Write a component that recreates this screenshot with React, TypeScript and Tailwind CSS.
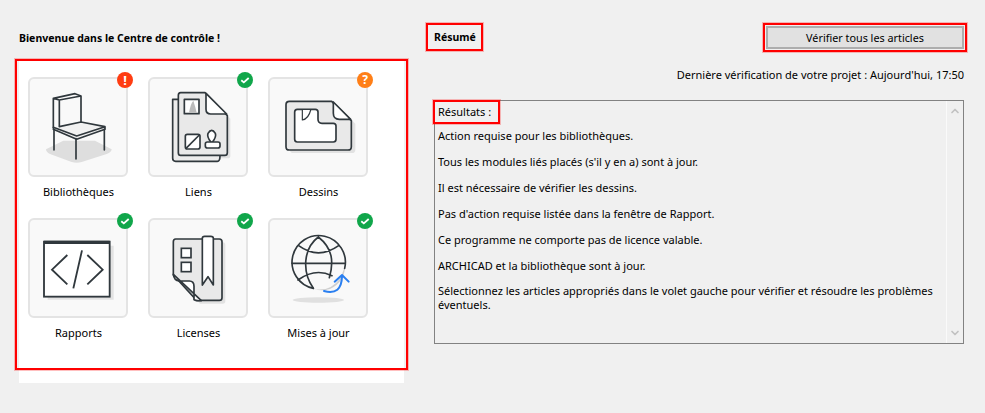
import { ChevronDown, ChevronUp } from "lucide-react";
import type { ReactNode } from "react";

const ink = "#30383d";

function Badge({ kind }: { kind: "error" | "ok" | "question" }) {
  const bg = kind === "error" ? "bg-[#ff3d12]" : kind === "question" ? "bg-[#ff7f17]" : "bg-[#10a64a]";
  return (
    <span className={`absolute -right-[7px] -top-[7px] flex h-4 w-4 items-center justify-center rounded-full ${bg}`}>
      {kind === "ok" && (
        <svg width="10" height="10" viewBox="0 0 10 10" fill="none" stroke="#fff" strokeWidth="1.8">
          <path d="M1.3 5.3 L3.8 7.4 L8.7 3" />
        </svg>
      )}
      {kind === "error" && <span className="text-[13px] font-bold leading-none text-white">!</span>}
      {kind === "question" && <span className="text-[12px] font-bold leading-none text-white">?</span>}
    </span>
  );
}

function Tile({ label, kind, box, children }: { label: string; kind: "error" | "ok" | "question"; box: string; children: ReactNode }) {
  return (
    <div className="flex h-[141px] w-[100px] flex-col items-center">
      <div className="relative h-[100px] w-[100px] rounded-[6px] border-2 border-[#e4e4e4] bg-[#f9f9f9]">
        <svg className="absolute -left-[2px] -top-[2px]" width="100" height="100" viewBox={box} fill="none" stroke={ink} strokeWidth="5" strokeLinejoin="round" strokeLinecap="round">
          {children}
        </svg>
        <Badge kind={kind} />
      </div>
      <span className="mt-[7px] whitespace-nowrap pl-px text-center leading-[16px]">{label}</span>
    </div>
  );
}

const liensDoc = "M512 128 H585 L652 197 V308 Q652 316 644 316 H512 Q505 316 505 308 V136 Q505 128 512 128Z";
const dessinsDoc = "M118 154 H245 L304 212 V290 Q304 300 294 300 H118 Q108 300 108 290 V164 Q108 154 118 154Z";
const licensesDoc = "M497 102 H628 Q636 102 636 110 V278 Q636 286 628 286 H560 L490 210 V110 Q490 102 497 102Z";

export default function App() {
  return (
    <div className="flex h-[413px] w-[985px] overflow-hidden bg-[#f0f0f0] text-[11px] text-black" style={{ fontFamily: '"Noto Sans", sans-serif' }}>
      <div className="ml-[19px] flex w-[385px] flex-col">
        <h1 className="mt-[30px] h-[29px] text-[10.5px] font-bold leading-[16px]">Bienvenue dans le Centre de contrôle !</h1>
        <div className="relative h-[324px] bg-white pl-[9px] pt-[18px]">
          <div className="absolute -left-[4px] top-0 h-[311px] w-[393px] border-2 border-[#ff0000] ring-1 ring-[#ff0000]/25" />
          <div className="grid w-[340px] grid-cols-3 gap-x-[20px]">
            <Tile label="Bibliothèques" kind="error" box="54 81 300 300">
              <path d="M108 298 L160 272 H255 L305 298 Q305 306 290 312 L215 336 Q200 340 185 336 L120 312 Q108 306 108 298Z" fill="#dedede" stroke="none" />
              <path d="M130 235 V145 L195 131 L213 138 V218 M130 145 L148 150 L213 138 M148 150 V228" />
              <path d="M130 232 L200 258 L285 230 L213 216 L148 230 M130 238 L200 268 L285 238 V230" fill="#f1f1f1" />
              <path d="M132 238 V300 M198 266 V327 M283 238 V300" />
            </Tile>
            <Tile label="Liens" kind="ok" box="414 81 300 300">
              <path d={liensDoc} fill="#e2e2e2" stroke="none" transform="translate(9 9)" />
              <path d="M505 148 H488 V325 Q488 334 497 334 H622 Q630 334 630 318" fill="#ececec" />
              <path d={liensDoc} fill="#e9e9e9" />
              <path d="M588 130 V178 Q588 192 602 192 H650 Z" fill="#fff" />
              <rect x="523" y="148" width="44" height="43" fill="#fff" />
              <path d="M537 188 Q542 160 550 152 Q556 170 560 188Z" fill="#bbb" stroke="none" />
              <rect x="526" y="253" width="44" height="44" rx="6" fill="#fff" />
              <path d="M528 295 L568 255" />
              <path d="M603 277 Q590 260 594 250 Q605 232 616 250 Q620 260 607 277" fill="#fff" />
              <rect x="586" y="276" width="44" height="18" rx="6" fill="#fff" />
            </Tile>
            <Tile label="Dessins" kind="question" box="54 81 300 300">
              <path d={dessinsDoc} fill="#e2e2e2" stroke="none" transform="translate(12 9)" />
              <path d={dessinsDoc} fill="#e9e9e9" />
              <path d="M250 156 V190 Q250 208 268 208 H302 Z" fill="#fff" />
              <path d="M142 178 H196 Q204 178 204 186 V208 Q204 220 216 220 H250 Q258 220 258 228 V268 Q258 276 250 276 H142 Q134 276 134 268 V186 Q134 178 142 178Z" fill="#fff" />
              <path d="M157 180 V210 Q176 206 182 180" fill="#fff" strokeWidth="3.5" />
            </Tile>
            <Tile label="Rapports" kind="ok" box="54 39 300 300">
              <path d="M113 122 H311 V284 H113Z" fill="#e2e2e2" stroke="none" />
              <rect x="102" y="110" width="197" height="165" fill="#fff" strokeLinejoin="miter" strokeWidth="5.5" />
              <path d="M102 112 H299" strokeWidth="10" strokeLinecap="butt" />
              <path d="M172 150 L126 194 L172 238 M232 150 L278 194 L232 238 M216 136 L190 250" strokeWidth="5.5" strokeLinecap="butt" strokeLinejoin="miter" />
            </Tile>
            <Tile label="Licenses" kind="ok" box="414 39 300 300">
              <path d={licensesDoc} fill="#e2e2e2" stroke="none" transform="translate(10 10)" />
              <path d={licensesDoc} fill="#e9e9e9" />
              <path d="M490 208 Q492 226 508 228 H538 Q552 228 552 244 V284 Q556 288 574 287 Z" fill="#fff" />
              <rect x="514" y="130" width="29" height="28" fill="#fff" strokeLinejoin="miter" />
              <rect x="514" y="172" width="29" height="28" fill="#fff" strokeLinejoin="miter" />
              <path d="M577 240 V100 Q577 94 584 94 H602 Q610 94 610 100 V240 L594 215 Z" fill="#fff" />
            </Tile>
            <Tile label="Mises à jour" kind="ok" box="54 39 300 300">
              <ellipse cx="205" cy="285" rx="77" ry="8" fill="#e0e0e0" stroke="none" />
              <path d="M192 252 Q240 262 272 218 L286 180 Q284 232 240 252 Q215 260 192 252Z" fill="#cfcfcf" stroke="none" />
              <path d="M190 250 A80 80 0 1 1 284 190" />
              <path d="M205 96 C160 130 155 200 190 250 M205 96 C248 130 252 170 238 218 M126 175 H284 M146 122 Q205 165 266 122 M144 225 Q195 188 246 212" />
              <path d="M222 258 Q275 272 276 214 M254 230 L276 210 L296 230" stroke="#2a7ff0" strokeWidth="6" />
            </Tile>
          </div>
        </div>
      </div>

      <div className="ml-[30px] flex w-[530px] flex-col">
        <div className="mt-[23px] flex h-[29px] items-start justify-between">
          <h2 className="-ml-[8px] flex h-[28px] w-[57px] items-center border-2 border-[#ff0000] pl-[6px] pt-[2px] text-[10.5px] font-bold ring-1 ring-[#ff0000]/25">Résumé</h2>
          <div className="-mr-[3px] border-2 border-[#ff0000] p-px ring-1 ring-[#ff0000]/25">
            <button type="button" className="flex h-[23px] w-[198px] items-center justify-center border-2 border-[#adadad] bg-[#e1e1e1] pt-px text-[10.8px]">
              Vérifier tous les articles
            </button>
          </div>
        </div>
        <p className="mt-[15px] h-[33px] text-right leading-[16px]">Dernière vérification de votre projet : Aujourd'hui, 17:50</p>
        <div className="flex h-[244px] border border-[#828282]">
          <div className="flex-1 pl-[3px]">
            <p className="-mb-[1px] -ml-[5px] -mt-[1px] flex h-[24px] w-[67px] items-center border-2 border-[#ff0000] pl-[3px] ring-1 ring-[#ff0000]/25">Résultats :</p>
            <div className="flex flex-col gap-[10px] pt-[5px] leading-[16px]">
              <p>Action requise pour les bibliothèques.</p>
              <p>Tous les modules liés placés (s'il y en a) sont à jour.</p>
              <p>Il est nécessaire de vérifier les dessins.</p>
              <p>Pas d'action requise listée dans la fenêtre de Rapport.</p>
              <p>Ce programme ne comporte pas de licence valable.</p>
              <p>ARCHICAD et la bibliothèque sont à jour.</p>
              <p className="leading-[14px]">Sélectionnez les articles appropriés dans le volet gauche pour vérifier et résoudre les problèmes éventuels.</p>
            </div>
          </div>
          <div className="flex w-[17px] flex-col items-center justify-between border-l border-[#fafafa] py-[4px] text-[#c2c2c2]">
            <ChevronUp size={12} strokeWidth={3.5} />
            <ChevronDown size={12} strokeWidth={3.5} />
          </div>
        </div>
      </div>
    </div>
  );
}
